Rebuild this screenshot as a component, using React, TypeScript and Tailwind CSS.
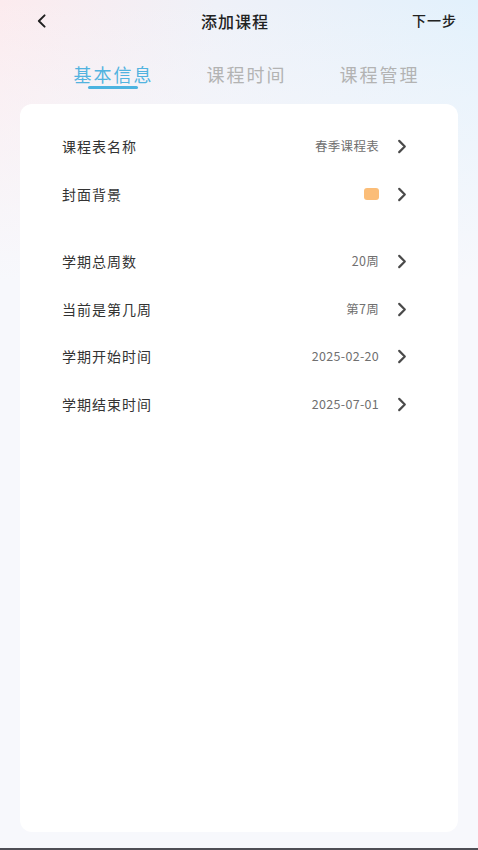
import React from "react";

const Chevron = ({ className = "" }: { className?: string }) => (
  <svg viewBox="0 0 10 16" className={className} fill="none">
    <path d="M2 2l6 6-6 6" stroke="currentColor" strokeWidth="2.3" strokeLinecap="round" strokeLinejoin="round" />
  </svg>
);

type Row = { label: string; value?: string; swatch?: boolean };

const Item = ({ row }: { row: Row }) => (
  <div className="h-[47.5px] flex items-center pl-[42px] pr-[51px]">
    <span className="text-[14px] tracking-[1px] text-[#333333]">{row.label}</span>
    <div className="ml-auto flex items-center">
      {row.swatch ? (
        <span className="w-[15px] h-[12px] rounded-[3px] bg-[#fbbd78]" />
      ) : (
        <span className="text-[12.5px] tracking-[0.3px] text-[#707070]">{row.value}</span>
      )}
      <Chevron className="ml-[18px] w-[10px] h-[15px] text-[#4a4a4a]" />
    </div>
  </div>
);

export default function App() {
  const rows1: Row[] = [
    { label: "课程表名称", value: "春季课程表" },
    { label: "封面背景", swatch: true },
  ];
  const rows2: Row[] = [
    { label: "学期总周数", value: "20周" },
    { label: "当前是第几周", value: "第7周" },
    { label: "学期开始时间", value: "2025-02-20" },
    { label: "学期结束时间", value: "2025-07-01" },
  ];
  return (
    <div
      className="w-[478px] h-[850px] flex flex-col overflow-hidden bg-[linear-gradient(to_bottom,rgba(247,248,252,0)_0px,rgba(247,248,252,0.4)_90px,#f7f8fc_280px),linear-gradient(90deg,#fcebee_0%,#eff1f8_45%,#e2f1fc_100%)]"
      style={{ fontFamily: '"Noto Sans CJK SC", "Noto Sans", sans-serif' }}
    >
      {/* header */}
      <div className="h-[41px] shrink-0 grid grid-cols-[1fr_auto_1fr] items-center pl-[12px] pr-[21px]">
        <svg viewBox="0 0 12 16" className="ml-[24px] w-[11px] h-[14px] text-[#1f1f1f]" fill="none">
          <path d="M9.5 1.5L3 8l6.5 6.5" stroke="currentColor" strokeWidth="2.2" strokeLinecap="round" strokeLinejoin="round" />
        </svg>
        <div className="text-center text-[16px] font-medium tracking-[1px] text-[#222222] pl-[1px]">添加课程</div>
        <div className="justify-self-end text-[14px] font-medium tracking-[1px] text-[#222222]">下一步</div>
      </div>
      {/* tabs */}
      <div className="h-[63px] shrink-0 grid grid-cols-3 pl-[46px] pr-[33px] pt-[18px]">
        <div className="flex flex-col items-center">
          <span className="text-[18px] leading-[30px] tracking-[2px] text-[#52b3df] pl-[2px]">基本信息</span>
          <span className="mt-[-3px] w-[50px] h-[3px] rounded-full bg-[#4cb3e0]" />
        </div>
        <div className="flex flex-col items-center">
          <span className="text-[18px] leading-[30px] tracking-[2px] text-[#b3b3b3] pl-[2px]">课程时间</span>
        </div>
        <div className="flex flex-col items-center">
          <span className="text-[18px] leading-[30px] tracking-[2px] text-[#b3b3b3] pl-[2px]">课程管理</span>
        </div>
      </div>
      {/* card */}
      <div className="flex-1 mx-[20px] bg-white rounded-[12px] pt-[19px]">
        {rows1.map((r) => (
          <Item key={r.label} row={r} />
        ))}
        <div className="h-[20px]" />
        {rows2.map((r) => (
          <Item key={r.label} row={r} />
        ))}
      </div>
      <div className="h-[16px] shrink-0" />
      <div className="h-[2px] shrink-0 bg-[#4f4f55]" />
    </div>
  );
}
